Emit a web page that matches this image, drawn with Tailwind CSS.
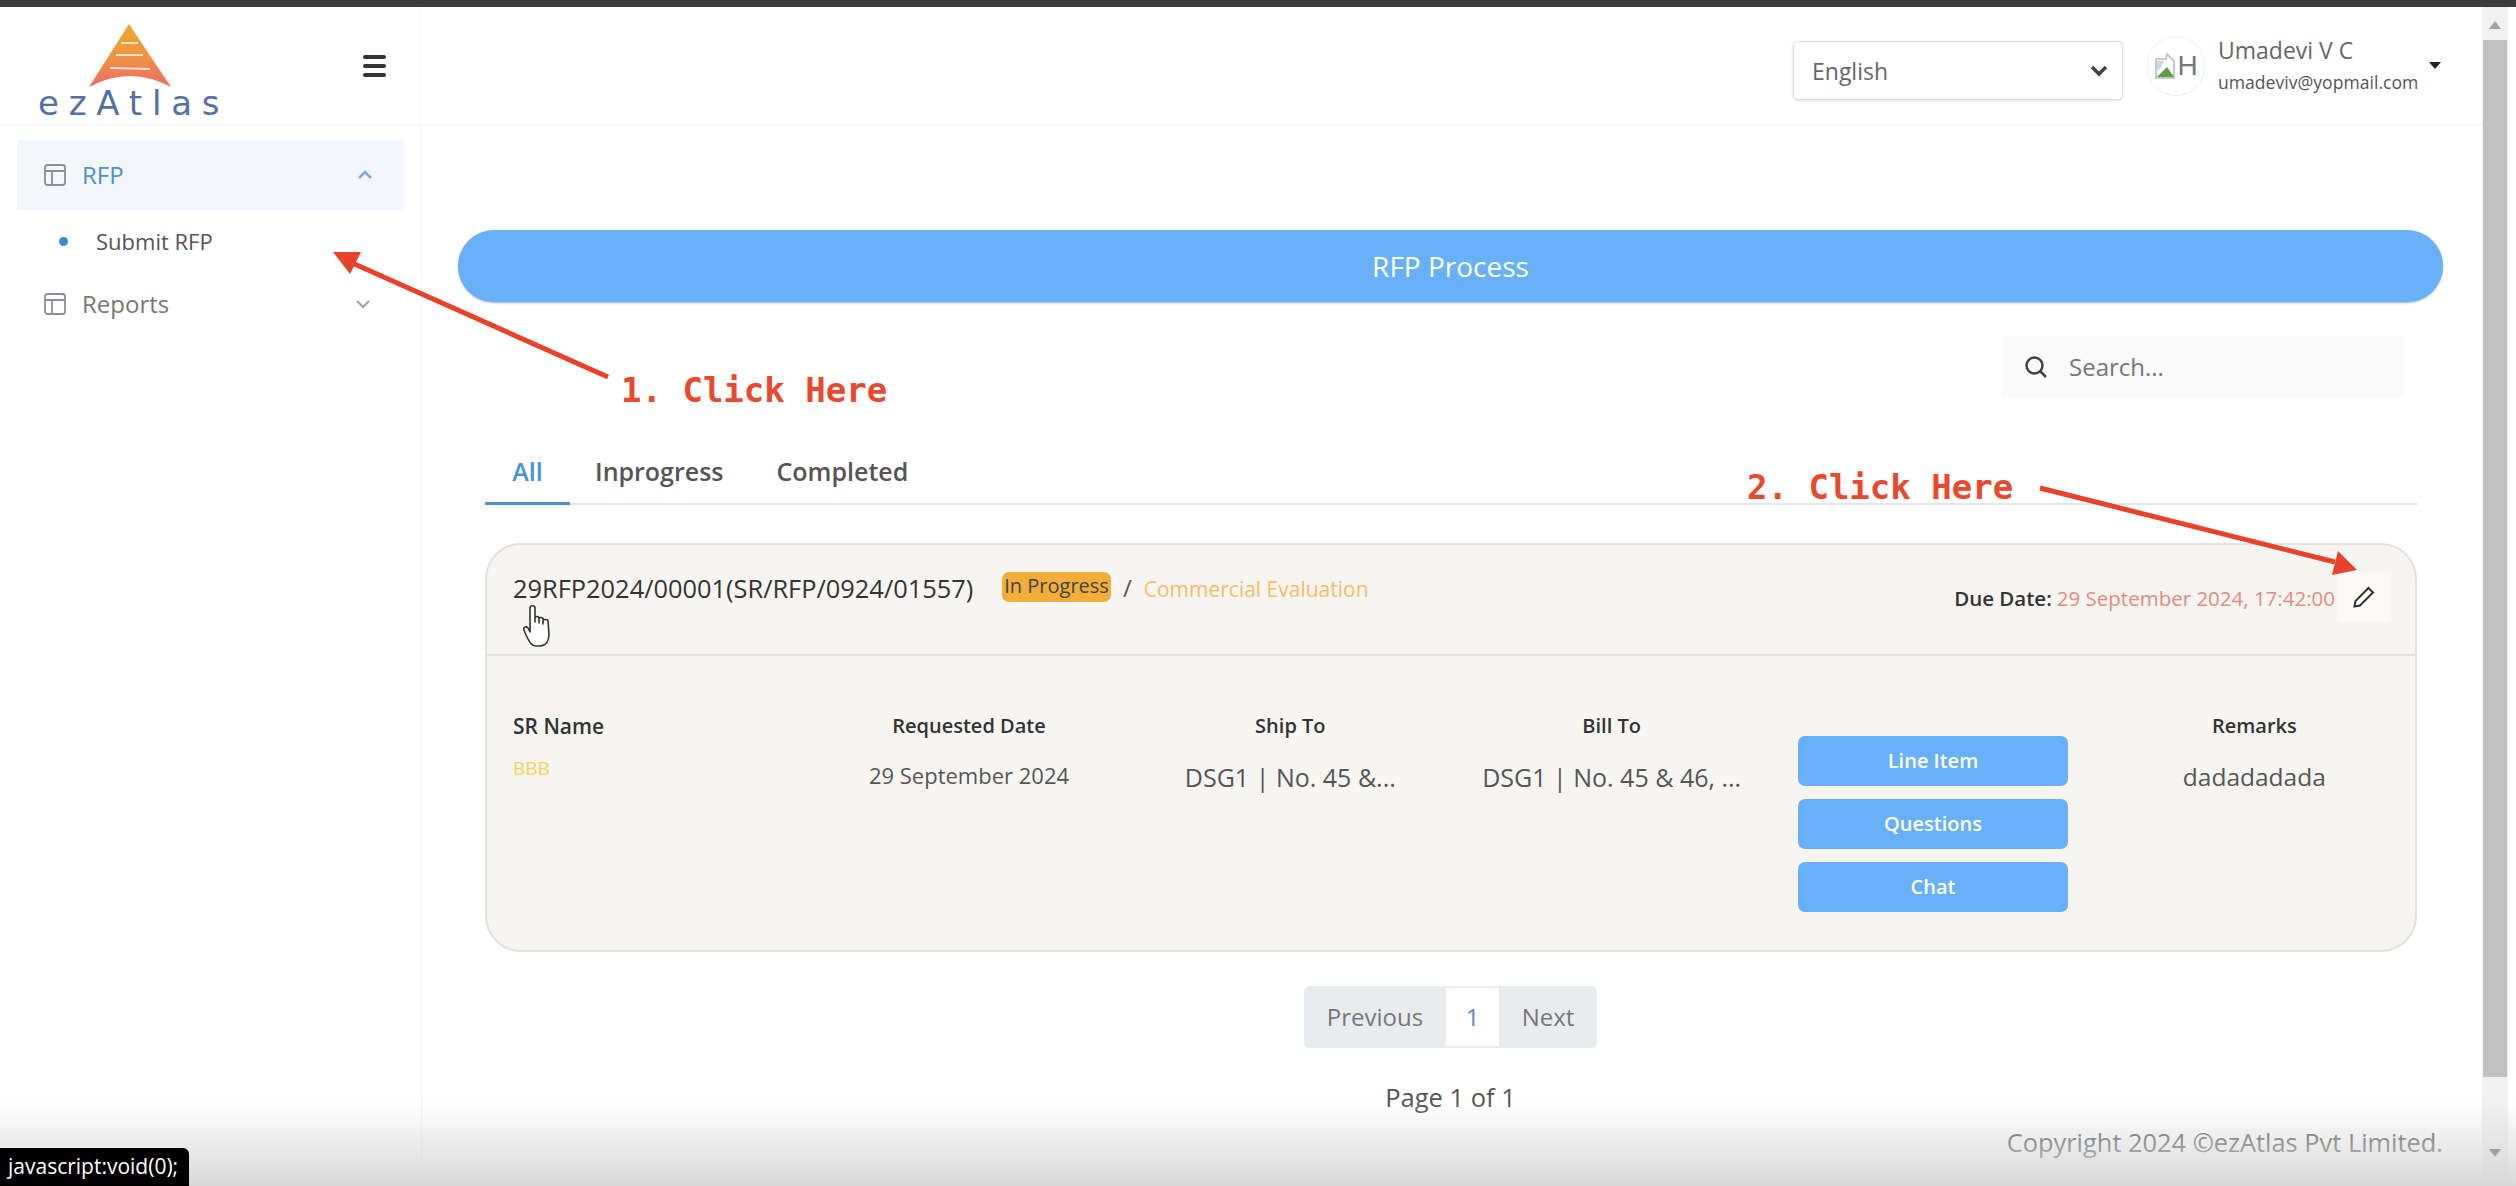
<!DOCTYPE html>
<html lang="en">
<head>
  <meta charset="UTF-8" />
  <meta name="viewport" content="width=device-width, initial-scale=1.0" />
  <title>ezAtlas – RFP Process</title>
  <script src="https://cdn.jsdelivr.net/npm/@tailwindcss/browser@4"></script>
</head>

<body class="relative w-[2516px] h-[1186px] overflow-hidden bg-white flex flex-col font-['Open_Sans',sans-serif] text-[#444]">
  <!-- window top edge -->
  <div class="h-[7px] shrink-0 bg-[#3c3c3c]"></div>

  <div class="flex-1 flex min-h-0">
    <div class="flex-1 flex flex-col min-w-0">
      <!-- Top header -->
      <header class="h-[118px] shrink-0 flex border-b border-[#f3f3f3]">
        <div class="w-[422px] shrink-0 flex items-center border-r border-[#f7f7f7]">
          <div class="w-[297px] pl-[38px] flex flex-col">
            <svg class="ml-[50px] mt-[12px]" width="86" height="66" viewBox="0 0 86 66">
              <defs>
                <linearGradient id="logoFill" x1="0" y1="0" x2="0" y2="1">
                  <stop offset="0" stop-color="#eda72f" />
                  <stop offset="0.55" stop-color="#f29145" />
                  <stop offset="1" stop-color="#ee6a66" />
                </linearGradient>
              </defs>
              <path d="M41 1 L83 64 Q42 42 1 64 Z" fill="url(#logoFill)" />
              <path d="M33 20 L50 20 M28 32 L55 32 M22 45 L62 46" stroke="#fff" stroke-width="2" opacity="0.75" fill="none" />
            </svg>
            <span class="font-['DejaVu_Sans',sans-serif] text-[34px] leading-[33px] tracking-[9.8px] text-[#5570a3] -mt-[2px] whitespace-nowrap">ezAtlas</span>
          </div>
          <!-- hamburger -->
          <div class="ml-[66px] flex flex-col gap-[5px] w-[23px]">
            <span class="h-[4px] rounded-sm bg-[#333]"></span>
            <span class="h-[4px] rounded-sm bg-[#333]"></span>
            <span class="h-[4px] rounded-sm bg-[#333]"></span>
          </div>
        </div>

        <div class="flex-1 flex items-center justify-end pr-[41px]">
          <div class="w-[330px] h-[59px] mt-[10px] border border-[#d9dce0] rounded-[5px] flex items-center justify-between pl-[18px] pr-[13px] text-[23px] text-[#666] shadow-sm mr-[24px]">
            <span class="mt-[2px]">English</span>
            <svg width="20" height="14" viewBox="0 0 20 14" fill="none" stroke="#444" stroke-width="3.5"><path d="M3 3 L10 10 L17 3" /></svg>
          </div>
          <div class="w-[58px] h-[60px] rounded-full border border-[#f0f0f0] flex items-center justify-center mr-[13px]">
            <svg width="24" height="30" viewBox="0 0 24 30">
              <path d="M2 8 H12 L13 3 L20 10 V27 H2 Z" fill="#fff" stroke="#b8b8b8" stroke-width="1.5" />
              <path d="M3 26 L13 16 L20 26 Z" fill="#5f9e46" />
              <path d="M3 10 H10 L6 18 L3 20 Z" fill="#c4d8ee" />
            </svg>
            <span class="text-[28px] text-[#777] font-['Liberation_Sans',sans-serif] -ml-[1px]">H</span>
          </div>
          <div class="flex flex-col w-[215px]">
            <span class="text-[23px] leading-[30px] text-[#666] -mt-[2px]">Umadevi V C</span>
            <span class="text-[17.6px] leading-[24px] mt-[5px] text-[#555] whitespace-nowrap">umadeviv@yopmail.com</span>
          </div>
          <span class="w-0 h-0 border-x-[6px] border-x-transparent border-t-[7px] border-t-[#222] -ml-[4px]"></span>
        </div>
      </header>

      <div class="flex-1 flex min-h-0">
        <!-- Sidebar -->
        <aside class="w-[422px] shrink-0 border-r border-[#f3f3f3] pt-[15px] pl-[17px] pr-[17px]">
          <div class="h-[70px] rounded-[3px] bg-[#f4f6fe] flex items-center pl-[27px] pr-[31px] text-[#4a90d4]">
            <svg class="mr-[16px]" width="22" height="22" viewBox="0 0 22 22" fill="none" stroke="#8a8f96" stroke-width="1.8"><rect x="1" y="1" width="20" height="20" rx="2.5" /><path d="M1 7 H21 M8 7 V21" /></svg>
            <span class="text-[24px]">RFP</span>
            <svg class="ml-auto" width="16" height="10" viewBox="0 0 16 10" fill="none" stroke="#7ea9d6" stroke-width="2.5"><path d="M2 8 L8 2 L14 8" /></svg>
          </div>
          <div class="h-[62px] flex items-center pl-[42px] text-[22px] text-[#555]">
            <span class="w-[9px] h-[9px] rounded-full bg-[#3d8ad0] mr-[28px]"></span>
            <span>Submit RFP</span>
          </div>
          <div class="h-[64px] flex items-center pl-[27px] pr-[33px] text-[#777]">
            <svg class="mr-[16px]" width="22" height="22" viewBox="0 0 22 22" fill="none" stroke="#8a8f96" stroke-width="1.8"><rect x="1" y="1" width="20" height="20" rx="2.5" /><path d="M1 7 H21 M8 7 V21" /></svg>
            <span class="text-[24px]">Reports</span>
            <svg class="ml-auto" width="16" height="10" viewBox="0 0 16 10" fill="none" stroke="#a0a0a0" stroke-width="2"><path d="M2 2 L8 8 L14 2" /></svg>
          </div>
        </aside>

        <!-- Main content -->
        <main class="flex-1 min-w-0 pl-[36px] pr-[39px] pt-[105px]">
          <div class="h-[72px] rounded-[36px] bg-[#68b0f8] shadow-[0_1px_2px_rgba(60,100,160,0.5)] flex items-center justify-center text-[28px] text-white">RFP Process</div>

          <div class="flex justify-end mt-[34px] pr-[39px]">
            <div class="w-[402px] h-[62px] rounded-[5px] bg-[#fafafa] flex items-center pl-[22px] text-[24px] text-[#777]">
              <svg class="mr-[21px]" width="24" height="24" viewBox="0 0 24 24" fill="none" stroke="#444" stroke-width="2.5"><circle cx="10.5" cy="10.5" r="8" /><path d="M16.5 16.5 L22 22" /></svg>
              <span>Search...</span>
            </div>
          </div>

          <!-- Tabs -->
          <div class="ml-[27px] mr-[26px] mt-[50px] h-[57px] flex border-b-2 border-[#e6e6e6] text-[25px] font-semibold text-[#555]">
            <div class="w-[85px] h-[57px] border-b-[3px] border-[#4a90d4] text-center pt-[5px] text-[#4a90d4]">All</div>
            <div class="ml-[25px] pt-[5px]">Inprogress</div>
            <div class="ml-[53px] pt-[5px]">Completed</div>
          </div>

          <!-- RFP card -->
          <section class="ml-[27px] mr-[26px] mt-[38px] h-[409px] rounded-[36px] border-2 border-[#e2e2e2] bg-[#f7f5f2]">
            <div class="h-[111px] border-b-2 border-[#e2e2e2] flex items-start pl-[26px] pr-[24px] whitespace-nowrap">
              <span class="mt-[27px] text-[25.4px] text-[#333] leading-[32px]">29RFP2024/00001(SR/RFP/0924/01557)</span>
              <span class="mt-[27px] ml-[29px] h-[30px] px-[2px] rounded-[7px] bg-[#f3ad38] text-[20px] leading-[28px] text-[#444]">In Progress</span>
              <span class="mt-[27px] ml-[12px] text-[24px] leading-[32px] text-[#555]">/</span>
              <span class="mt-[29px] ml-[12px] text-[21px] leading-[30px] text-[#f6bd63]">Commercial Evaluation</span>
              <div class="ml-auto mt-[28px] h-[50px] flex items-center">
                <span class="text-[20.5px] font-semibold text-[#333]">Due Date:</span>
                <span class="ml-[5px] text-[20.5px] text-[#e58a7f]">29 September 2024, 17:42:00</span>
                <span class="ml-[2px] w-[54px] h-[50px] -mt-[3px] bg-[#faf9f7] flex items-center justify-center">
                  <svg width="24" height="24" viewBox="0 0 24 24" fill="none" stroke="#333" stroke-width="2"><path d="M16.5 3 L21 7.5 L8 20.5 L2.5 21.5 L3.5 16 Z" /></svg>
                </span>
              </div>
            </div>

            <div class="grid grid-cols-6 pt-[54px]">
              <div class="pl-[26px]">
                <div class="text-[21px] font-semibold leading-[32px] text-[#333]">SR Name</div>
                <div class="mt-[14px] text-[19px] leading-[24px] text-[#f4d456]">BBB</div>
              </div>
              <div class="text-center">
                <div class="text-[20px] font-semibold leading-[32px] text-[#333]">Requested Date</div>
                <div class="mt-[18px] text-[22px] leading-[30px] text-[#555]">29 September 2024</div>
              </div>
              <div class="text-center">
                <div class="text-[20px] font-semibold leading-[32px] text-[#333]">Ship To</div>
                <div class="mt-[18px] text-[25px] leading-[34px] text-[#555]">DSG1 | No. 45 &amp;...</div>
              </div>
              <div class="text-center">
                <div class="text-[20px] font-semibold leading-[32px] text-[#333]">Bill To</div>
                <div class="mt-[18px] text-[25px] leading-[34px] text-[#555]">DSG1 | No. 45 &amp; 46, ...</div>
              </div>
              <div class="flex flex-col items-center gap-[13px] pt-[26px] text-[20px] font-semibold text-white">
                <div class="w-[270px] h-[50px] rounded-[7px] bg-[#68b0f8] flex items-center justify-center">Line Item</div>
                <div class="w-[270px] h-[50px] rounded-[7px] bg-[#68b0f8] flex items-center justify-center">Questions</div>
                <div class="w-[270px] h-[50px] rounded-[7px] bg-[#68b0f8] flex items-center justify-center">Chat</div>
              </div>
              <div class="text-center">
                <div class="text-[20px] font-semibold leading-[32px] text-[#333]">Remarks</div>
                <div class="mt-[18px] text-[24.5px] leading-[34px] text-[#555]">dadadadada</div>
              </div>
            </div>
          </section>

          <!-- Pagination -->
          <div class="mt-[34px] flex justify-center">
            <div class="w-[293px] h-[62px] rounded-[6px] bg-[#e9ecef] flex items-center text-[24px] text-[#777]">
              <span class="w-[142px] text-center">Previous</span>
              <span class="w-[53px] h-[58px] bg-white text-center leading-[58px] text-[#5b86d6]">1</span>
              <span class="flex-1 text-center">Next</span>
            </div>
          </div>
          <div class="mt-[30px] text-center text-[25.5px] text-[#555]">Page 1 of 1</div>
          <div class="mt-[7px] text-right text-[25.4px] text-[#555] whitespace-nowrap">Copyright 2024 ©ezAtlas Pvt Limited.</div>
        </main>
      </div>
    </div>

    <!-- Browser scrollbar -->
    <div class="w-[34px] shrink-0 relative">
      <div class="w-[26px] h-full bg-[#f1f1f1] flex flex-col items-center">
        <span class="mt-[14px] w-0 h-0 border-x-[6px] border-x-transparent border-b-[8px] border-b-[#a3a3a3]"></span>
        <div class="mt-[11px] w-[24px] h-[1037px] bg-[#c1c1c1]"></div>
        <span class="mt-[72px] w-0 h-0 border-x-[6px] border-x-transparent border-t-[8px] border-t-[#505050]"></span>
      </div>
    </div>
  </div>

  <!-- screen recording fade at the bottom -->
  <div class="absolute left-0 right-0 bottom-0 h-[84px] bg-gradient-to-b from-white/0 to-[#d8d8d8] pointer-events-none"></div>

  <!-- link status tooltip -->
  <div class="absolute left-0 bottom-0 w-[189px] h-[38px] bg-black rounded-tr-[6px] text-white text-[21px] leading-[36px] pl-[8px] whitespace-nowrap">javascript:void(0);</div>

  <!-- hand cursor over the RFP number -->
  <svg class="absolute left-[522px] top-[604px]" width="32" height="44" viewBox="0 0 32 44" fill="#fff" stroke="#333" stroke-width="1.6" stroke-linejoin="round">
    <path d="M8 4 C8 1 13 1 13 4 L13 18 L13 14 C13 12 17 12 17 14 L17 19 L17 15 C17 13 21 13 21 15 L21 20 L21 17 C21 15 26 15 26 17 L27 30 C27 37 24 42 18 42 L14 42 C9 42 7 37 4 31 L2 26 C1 23 4 22 6 24 L8 28 Z" />
  </svg>

  <!-- tutorial annotations -->
  <span class="absolute left-[621px] top-[368px] font-['DejaVu_Sans_Mono',monospace] font-bold text-[34px] leading-[44px] text-[#e8492f] whitespace-nowrap">1. Click Here</span>
  <span class="absolute left-[1747px] top-[465px] font-['DejaVu_Sans_Mono',monospace] font-bold text-[34px] leading-[44px] text-[#e8492f] whitespace-nowrap">2. Click Here</span>
  <svg class="absolute left-0 top-0 pointer-events-none" width="2516" height="1186" fill="none">
    <path d="M608 377 L350 262" stroke="#e8432a" stroke-width="5" />
    <path d="M333 252 L361 252 L350 274 Z" fill="#e8432a" />
    <path d="M2040 488 L2335 562" stroke="#e8432a" stroke-width="5" />
    <path d="M2357 570 L2332 575 L2338 551 Z" fill="#e8432a" />
  </svg>
</body>
</html>
